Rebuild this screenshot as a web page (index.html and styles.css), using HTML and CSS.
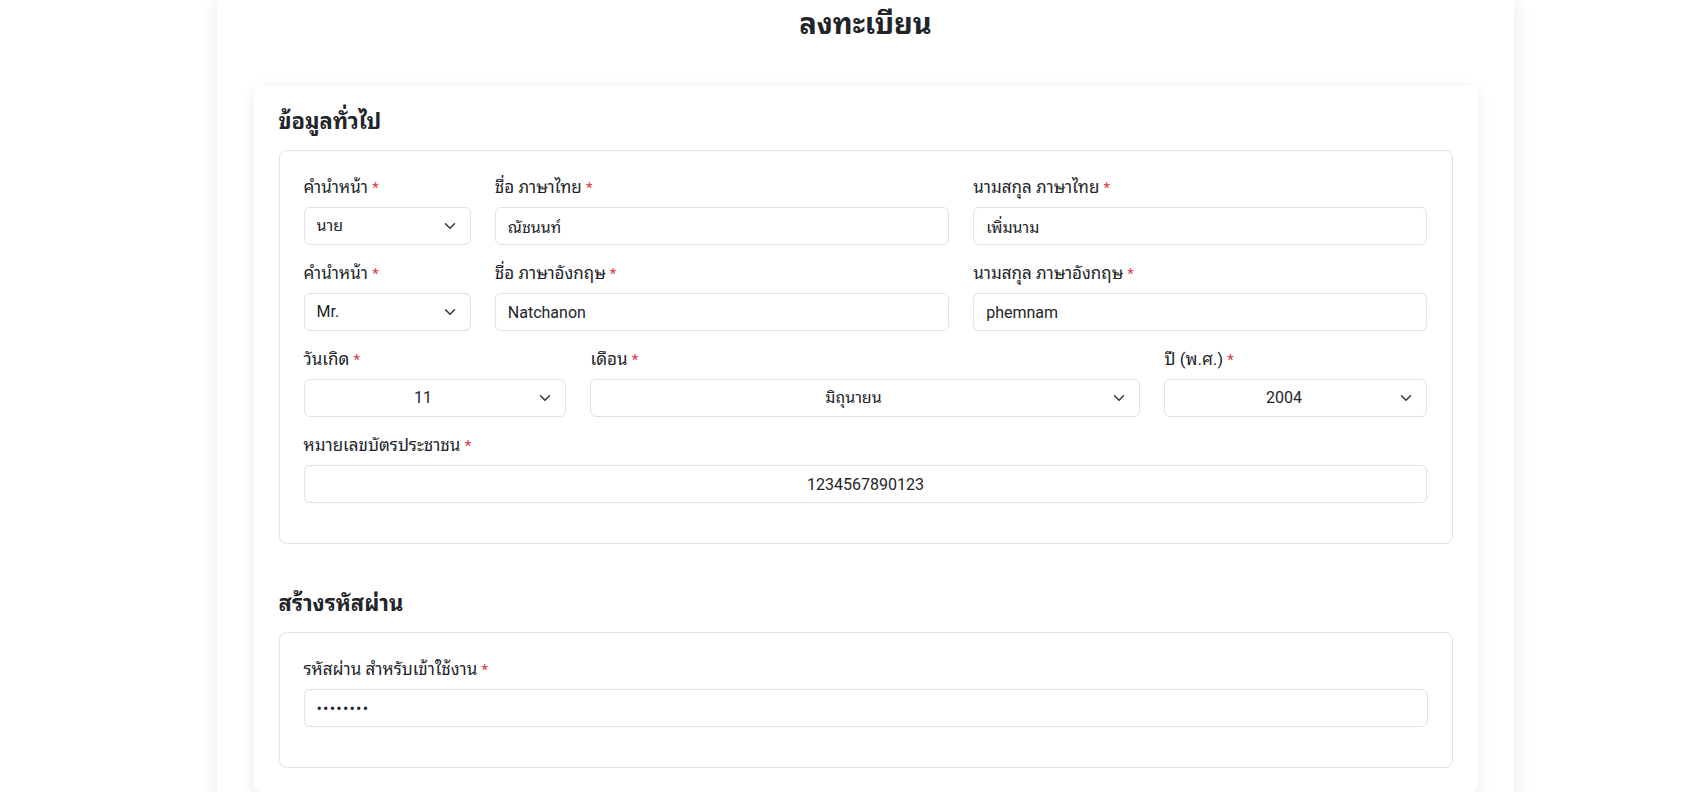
FILE: index.html
```html
<!DOCTYPE html>
<html lang="th">
<head>
<meta charset="utf-8">
<title>ลงทะเบียน</title>
<link rel="stylesheet" href="styles.css">
</head>
<body>
<div class="page">
  <main class="panel">
    <h1 class="title">ลงทะเบียน</h1>
    <form class="card">
      <section class="section">
        <h2 class="section-title">ข้อมูลทั่วไป</h2>
        <div class="group">
          <div class="grid">
            <div class="field span-2">
              <label class="label">คำนำหน้า <span class="req">*</span></label>
              <select class="control select"><option>นาย</option></select>
            </div>
            <div class="field span-5">
              <label class="label">ชื่อ ภาษาไทย <span class="req">*</span></label>
              <input class="control" type="text" value="ณัชนนท์">
            </div>
            <div class="field span-5">
              <label class="label">นามสกุล ภาษาไทย <span class="req">*</span></label>
              <input class="control" type="text" value="เพิ่มนาม">
            </div>

            <div class="field span-2">
              <label class="label">คำนำหน้า <span class="req">*</span></label>
              <select class="control select"><option>Mr.</option></select>
            </div>
            <div class="field span-5">
              <label class="label">ชื่อ ภาษาอังกฤษ <span class="req">*</span></label>
              <input class="control" type="text" value="Natchanon">
            </div>
            <div class="field span-5">
              <label class="label">นามสกุล ภาษาอังกฤษ <span class="req">*</span></label>
              <input class="control" type="text" value="phemnam">
            </div>

            <div class="field span-3">
              <label class="label">วันเกิด <span class="req">*</span></label>
              <select class="control select center"><option>11</option></select>
            </div>
            <div class="field span-6">
              <label class="label">เดือน <span class="req">*</span></label>
              <select class="control select center"><option>มิถุนายน</option></select>
            </div>
            <div class="field span-3">
              <label class="label">ปี (พ.ศ.) <span class="req">*</span></label>
              <select class="control select center"><option>2004</option></select>
            </div>

            <div class="field span-12">
              <label class="label">หมายเลขบัตรประชาชน <span class="req">*</span></label>
              <input class="control center" type="text" value="1234567890123">
            </div>
          </div>
        </div>
      </section>

      <section class="section">
        <h2 class="section-title">สร้างรหัสผ่าน</h2>
        <div class="group">
          <div class="grid">
            <div class="field span-12">
              <label class="label">รหัสผ่าน สำหรับเข้าใช้งาน <span class="req">*</span></label>
              <input class="control password" type="password" value="12345678">
            </div>
          </div>
        </div>
      </section>
    </form>
  </main>
</div>
</body>
</html>
```

FILE: styles.css
```css
* { box-sizing: border-box; }

html, body {
  margin: 0;
  padding: 0;
  background: #ffffff;
}

body {
  font-family: "Segoe UI", Roboto, "Noto Sans Thai Looped", "Noto Sans Thai", "Leelawadee UI", Tahoma, "Noto Sans", sans-serif;
  font-size: 16px;
  line-height: 1.5;
  color: #212529;
}

.page {
  display: flex;
  justify-content: center;
  padding-left: 23px;
  min-height: 792px;
}

.panel {
  width: 1297px;
  min-height: 792px;
  background: #ffffff;
  box-shadow: 0 0 18px rgba(0, 0, 0, 0.09);
  padding: 6px 36.5px 40px;
}

.title {
  margin: 0 0 44px;
  font-size: 29px;
  line-height: 36px;
  height: 36px;
  font-weight: 700;
  text-align: center;
  color: #212529;
}

.card {
  width: 1224px;
  background: #ffffff;
  border-radius: 8px;
  box-shadow: 0 4px 16px rgba(0, 0, 0, 0.09);
  padding: 24px 25px;
}

.section + .section {
  margin-top: 48px;
}

.section-title {
  margin: 0 0 16px;
  font-size: 22px;
  line-height: 24px;
  height: 24px;
  font-weight: 700;
  color: #212529;
}

.group {
  border: 1px solid #dee2e6;
  border-radius: 8px;
  padding: 24px 24px 40px;
}

.grid {
  display: grid;
  grid-template-columns: repeat(12, minmax(0, 1fr));
  column-gap: 24px;
  row-gap: 16px;
}

.span-2 { grid-column: span 2; }
.span-3 { grid-column: span 3; }
.span-5 { grid-column: span 5; }
.span-6 { grid-column: span 6; }
.span-12 { grid-column: span 12; }

.field {
  display: flex;
  flex-direction: column;
}

.label {
  display: block;
  height: 24px;
  margin-bottom: 8px;
  font-size: 17px;
  line-height: 24px;
  white-space: nowrap;
}

.req {
  color: #dc3545;
  font-size: 15px;
  line-height: 1;
}

.control {
  display: block;
  width: 100%;
  height: 38px;
  padding: 6px 12px;
  font-family: inherit;
  font-size: 16px;
  line-height: 24px;
  color: #212529;
  background-color: #ffffff;
  border: 1px solid #dee2e6;
  border-radius: 6px;
  appearance: none;
  -webkit-appearance: none;
  outline: none;
}

.password {
  letter-spacing: 1.2px;
}

.select {
  padding-right: 36px;
  background-image: url("data:image/svg+xml,%3csvg xmlns='http://www.w3.org/2000/svg' viewBox='0 0 16 16'%3e%3cpath fill='none' stroke='%23343a40' stroke-linecap='round' stroke-linejoin='round' stroke-width='2' d='m2 5 6 6 6-6'/%3e%3c/svg%3e");
  background-repeat: no-repeat;
  background-position: right 12px center;
  background-size: 16px 12px;
}

.center {
  text-align: center;
  text-align-last: center;
}
```
